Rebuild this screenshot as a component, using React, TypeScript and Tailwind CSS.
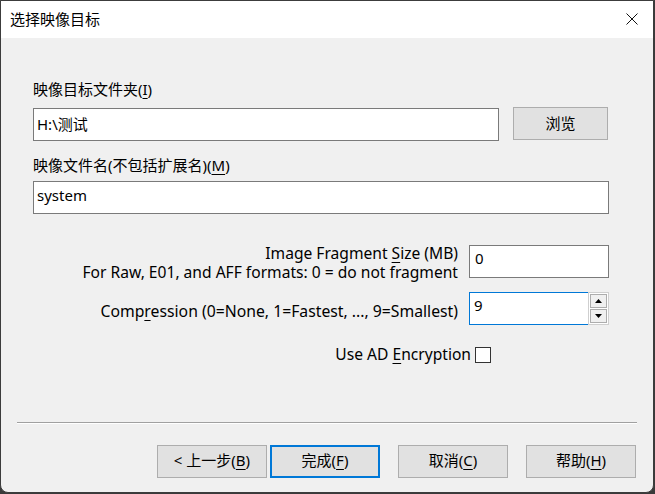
import React from 'react';

const font = "font-['Noto_Sans','Noto_Sans_CJK_SC',sans-serif]";

function U({ children }: { children: React.ReactNode }) {
  return <span className="underline underline-offset-[3px] decoration-[1px]">{children}</span>;
}

function Btn({ children, focused }: { children: React.ReactNode; focused?: boolean }) {
  return (
    <div
      className={
        'h-[33px] w-[110px] flex items-center justify-center bg-[#e1e1e1] text-[15px] text-black pb-[2px] ' +
        (focused ? 'border-2 border-[#0078d7]' : 'border border-[#adadad]')
      }
    >
      {children}
    </div>
  );
}

export default function App() {
  return (
    <div className={`w-[655px] h-[494px] bg-[#3a3a3a] ${font}`}>
      <div className="w-[654px] h-[493px] border border-[#3c3c3c] rounded-b-[8px] bg-[#f0f0f0] overflow-hidden flex flex-col">
        {/* Title bar */}
        <div className="h-[37px] bg-white flex items-center justify-between pl-[9px] pr-[15px] shrink-0">
          <span className="text-[15px] text-black leading-none mt-[-1px]">选择映像目标</span>
          <svg width="12" height="12" viewBox="0 0 12 12" className="mt-[-1px]">
            <path d="M0.5 0.5 L11.5 11.5 M11.5 0.5 L0.5 11.5" stroke="#111" strokeWidth="1" fill="none" />
          </svg>
        </div>

        {/* Content */}
        <div className="pl-[32px] w-[608px] flex flex-col text-[15px] text-black">
          <div className="mt-[41px] h-[20px] leading-[20px]">
            映像目标文件夹(<U>I</U>)
          </div>
          <div className="mt-[9px] flex items-start">
            <div className="w-[466px] h-[33px] bg-white border border-[#7a7a7a] flex items-center pl-[3px] pb-[1px]">
              H:\测试
            </div>
            <div className="ml-[14px] mt-[-1px] w-[95px] h-[33px] bg-[#e1e1e1] border border-[#adadad] flex items-center justify-center">
              浏览
            </div>
          </div>

          <div className="mt-[14px] h-[20px] leading-[20px]">
            映像文件名(不包括扩展名)(<U>M</U>)
          </div>
          <div className="mt-[6px] w-[576px] h-[33px] bg-white border border-[#7a7a7a] flex items-center pl-[3px] pb-[5px]">
            system
          </div>

          {/* Fragment size */}
          <div className="mt-[29px] flex justify-end items-start">
            <div className="text-right leading-[19px] mt-[1px] text-[15.6px]">
              <div>
                Image Fragment <U>S</U>ize (MB)
              </div>
              <div>For Raw, E01, and AFF formats: 0 = do not fragment</div>
            </div>
            <div className="ml-[11px] mt-[2px] w-[140px] h-[33px] bg-white border border-[#7a7a7a] flex items-center pl-[5px] pb-[7px]">
              0
            </div>
          </div>

          {/* Compression */}
          <div className="mt-[10px] flex justify-end items-start">
            <div className="leading-[19px] mt-[10px] text-[15.75px]">
              Comp<U>r</U>ession (0=None, 1=Fastest, ..., 9=Smallest)
            </div>
            <div className="ml-[11px] w-[140px] h-[33px] flex">
              <div className="flex-1 bg-white border border-[#0078d7] border-r-0 flex items-start pl-[4px] pt-[1px]">
                9
              </div>
              <div className="w-[21px] flex flex-col bg-white border border-[#cfcfcf] p-[1px] gap-[1px]">
                <div className="flex-1 bg-[#f0f0f0] border border-[#adadad] flex items-center justify-center">
                  <svg width="7" height="4" viewBox="0 0 7 4">
                    <path d="M0 4 L3.5 0 L7 4 Z" fill="#000" />
                  </svg>
                </div>
                <div className="flex-1 bg-[#f0f0f0] border border-[#adadad] flex items-center justify-center">
                  <svg width="7" height="4" viewBox="0 0 7 4">
                    <path d="M0 0 L3.5 4 L7 0 Z" fill="#000" />
                  </svg>
                </div>
              </div>
            </div>
          </div>

          {/* Encryption */}
          <div className="mt-[20px] flex justify-end items-center h-[20px] pr-[118px]">
            <span className="text-[15.6px] mt-[-1px]">
              Use AD <U>E</U>ncryption
            </span>
            <div className="ml-[4px] w-[16px] h-[16px] bg-white border border-[#333333]" />
          </div>
        </div>

        {/* Separator */}
        <div className="mt-[57px] ml-[16px] w-[620px] h-[2px] border-t border-[#a0a0a0] border-b border-b-white" />

        {/* Buttons */}
        <div className="mt-[21px] ml-[156px] flex">
          <Btn>
            &lt; 上一步(<U>B</U>)
          </Btn>
          <div className="ml-[3px]">
            <Btn focused>
              完成(<U>F</U>)
            </Btn>
          </div>
          <div className="ml-[18px]">
            <Btn>
              取消(<U>C</U>)
            </Btn>
          </div>
          <div className="ml-[18px]">
            <Btn>
              帮助(<U>H</U>)
            </Btn>
          </div>
        </div>
      </div>
    </div>
  );
}
